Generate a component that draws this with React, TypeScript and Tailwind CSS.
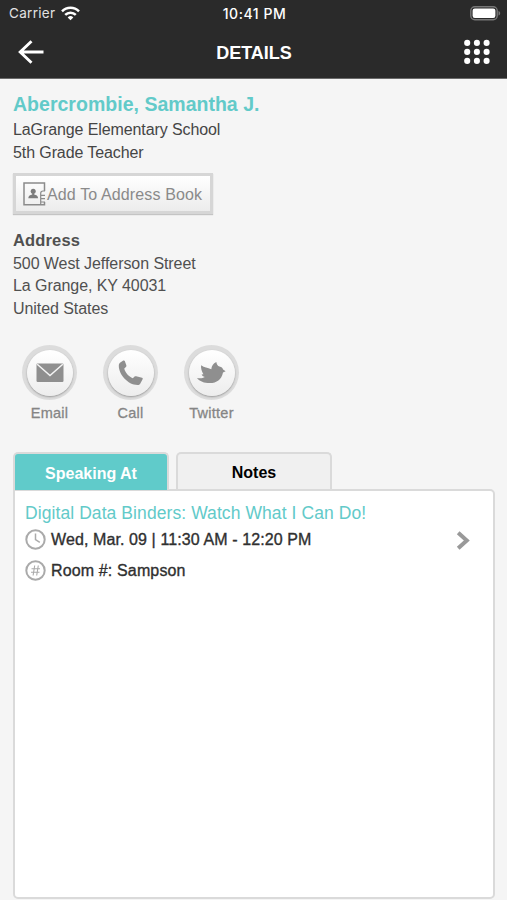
import type { ReactNode } from "react";
import { clsx } from "clsx";

const addressLines = [
  "500 West Jefferson Street",
  "La Grange, KY 40031",
  "United States",
];

const tabs = [
  { id: "speaking", label: "Speaking At", active: true },
  { id: "notes", label: "Notes", active: false },
];

function WifiIcon() {
  return (
    <svg width="19" height="15" viewBox="0 0 19 15" fill="none" stroke="#fff" strokeWidth="2.5">
      <path d="M1 5.4a12 12 0 0 1 17 0" />
      <path d="M4.2 8.9a7.4 7.4 0 0 1 10.6 0" />
      <path d="M9.5 14.2 6.7 11.4a4 4 0 0 1 5.6 0Z" fill="#fff" stroke="none" />
    </svg>
  );
}

function BatteryIcon() {
  return (
    <svg width="31" height="15" viewBox="0 0 31 15">
      <rect x="0.8" y="0.8" width="26.4" height="13" rx="4" fill="none" stroke="#777" strokeWidth="1.4" />
      <rect x="2.6" y="2.6" width="22.8" height="9.4" rx="2.2" fill="#fff" />
      <path d="M28.5 5v4.6c1-.4 1.7-1.2 1.7-2.3S29.5 5.4 28.5 5Z" fill="#777" />
    </svg>
  );
}

function BackIcon() {
  return (
    <svg width="27" height="24" viewBox="0 0 27 24" fill="none" stroke="#fff" strokeWidth="2.9">
      <path d="M25.5 12H2M13.5 1.2 2.2 12l11.3 10.8" />
    </svg>
  );
}

function GridIcon() {
  const steps = [3.2, 12.9, 22.6];
  return (
    <svg width="26" height="26" viewBox="0 0 26 26" fill="#fff">
      {steps.map((y) =>
        steps.map((x) => <circle key={`${x}-${y}`} cx={x} cy={y * 0.93 + 0.9} r="3.05" />)
      )}
    </svg>
  );
}

function AddressBookIcon() {
  return (
    <svg width="23" height="24" viewBox="0 0 23 24" fill="none" stroke="#8b8b8b" strokeWidth="1.5">
      <path d="M18 22.7H1V1h20.5v8M21.5 20v2.7H18" />
      <path d="M22 9h-2c-1.5 0-2.3.8-2.3 2.2v11.5M18 13.3h4M18 16.7h4M18 20h4" strokeWidth="1.2" />
      <circle cx="10.2" cy="9.2" r="2.5" fill="#7c7c7c" stroke="none" />
      <path d="M5.3 16.2c0-2.2 2-3.3 3.9-3.6v-1.8h2v1.8c1.9.3 3.9 1.4 3.9 3.6Z" fill="#7c7c7c" stroke="none" />
    </svg>
  );
}

function EmailIcon() {
  return (
    <svg width="28" height="20" viewBox="0 0 28 20">
      <rect x="0.5" y="0.5" width="27" height="18.5" rx="1.2" fill="#8f8f8f" />
      <path d="M1.2 1.2 14 12.5 26.8 1.2" fill="none" stroke="#f4f4f4" strokeWidth="1.5" />
    </svg>
  );
}

function PhoneIcon() {
  return (
    <svg width="26" height="26" viewBox="0 0 26 26" fill="#8f8f8f">
      <path d="M2.3 2.6 5.3.6c.6-.4 1.3-.2 1.5.4l1.6 4.6c.2.6 0 1.1-.5 1.5L6.3 8.5c.5 3.6 4.5 8.3 8.5 9.7l1.8-1.7c.5-.4 1-.5 1.6-.2l5.8 1.5c.7.2 1 .8.6 1.5l-2.4 4.4c-.3.7-.9 1.1-1.6 1.200C10.500 25.700.6 14.600.8 5.500c.1-1.300.6-2.300 1.500-2.900Z" />
    </svg>
  );
}

function TwitterIcon() {
  return (
    <svg width="29" height="22" viewBox="0 0 29 22" fill="#8f8f8f">
      <path d="M0 15.9c3 .6 5.600.5 7.800-1-1.800-.4-2.800-1.300-3.200-2.500l1.800-.2C4.700 9.200 3.700 6 4.100 3.200c3.300 2.300 6.400 2.500 10.200 4C14.500 4.100 16.200 1.500 19.300 0c.5 2.600 1.400 3.900 3.200 4.500 2 .4 3.200 1.500 3.600 3.100l2.500 1.600-2.600 1.200c-1.500 7.200-6.500 10.700-13.300 10.600C7.300 21 2.500 19.300 0 15.900Z" />
    </svg>
  );
}

function ClockIcon() {
  return (
    <svg width="21" height="21" viewBox="0 0 21 21" fill="none" stroke="#aaa" strokeWidth="2">
      <circle cx="10.5" cy="10.5" r="9.2" />
      <path d="M10.5 4.5v6.2l4.3 2.6" strokeWidth="1.5" />
    </svg>
  );
}

function RoomIcon() {
  return (
    <svg width="21" height="21" viewBox="0 0 21 21" fill="none" stroke="#aaa" strokeWidth="2">
      <circle cx="10.5" cy="10.5" r="9.2" />
      <path d="m9.7 5.5-1.6 10M13.3 5.5l-1.6 10M6.5 8.7h8.5M6 12.3h8.5" strokeWidth="1.1" />
    </svg>
  );
}

function ChevronIcon() {
  return (
    <svg width="15" height="19" viewBox="0 0 15 19" fill="none" stroke="#999" strokeWidth="4">
      <path d="m2.2 1.7 8.6 7.8-8.6 7.8" />
    </svg>
  );
}

function ContactButton({ label, children }: { label: string; children: ReactNode }) {
  return (
    <button type="button" className="flex w-[81px] flex-col items-center">
      <span className="flex size-[55px] items-center justify-center rounded-full bg-[#dcdcdc]">
        <span className="flex size-[46px] items-center justify-center rounded-full bg-linear-to-b from-white to-[#ededed] shadow-[0_1px_2px_#999]">
          {children}
        </span>
      </span>
      <span className="mt-[3px] text-[14.5px] leading-5 tracking-[0.25px] text-[#858585] [-webkit-text-stroke:0.3px_#858585]">
        {label}
      </span>
    </button>
  );
}

export default function App() {
  return (
    <div className="flex h-[900px] w-full flex-col overflow-hidden bg-[#f5f5f5] font-['Liberation_Sans',Arial,sans-serif] text-[#454545]">
      <header className="h-[79px] shrink-0 border-b border-[#6a6a6a] bg-[#2a2a2a] text-white">
        <div className="grid h-[27px] grid-cols-3 items-center pr-[6px] pl-[9px] font-[Inter,sans-serif] text-[13.5px]">
          <div className="flex items-center gap-[6px]">
            <span className="tracking-[0.3px] text-[#e2e2e2]">Carrier</span>
            <WifiIcon />
          </div>
          <span className="-ml-px text-center text-[14px] font-medium tracking-[0.55px]">10:41 PM</span>
          <span className="flex justify-end">
            <BatteryIcon />
          </span>
        </div>
        <div className="grid h-[49px] grid-cols-3 items-center pr-[17px] pl-[18px]">
          <BackIcon />
          <h1 className="pt-[4px] text-center text-[18px] font-bold">DETAILS</h1>
          <span className="flex justify-end">
            <GridIcon />
          </span>
        </div>
      </header>

      <main className="flex min-h-0 flex-1 flex-col px-[13px]">
        <section className="pt-[13px] text-[16px] leading-[22.5px]">
          <h2 className="mb-[3px] text-[19.5px] leading-[24px] font-bold tracking-[0.02px] text-[#62cac9]">
            Abercrombie, Samantha J.
          </h2>
          <p className="tracking-[-0.1px]">LaGrange Elementary School</p>
          <p className="tracking-[-0.1px]">5th Grade Teacher</p>
        </section>

        <button
          type="button"
          className="mt-[9px] flex h-[41px] w-[200px] shrink-0 items-center border-[3px] border-[#d6d6d6] bg-linear-to-b from-white to-[#ececec] pl-[7px] text-[16px] text-[#8a8a8a] shadow-[0_1px_1px_#c4c4c4]"
        >
          <AddressBookIcon />
          <span className="ml-px pt-[3px] whitespace-nowrap tracking-[0.13px]">Add To Address Book</span>
        </button>

        <section className="mt-[15px] text-[16px] leading-[22.5px] text-[#505050]">
          <h3 className="mb-px text-[16.5px] font-bold tracking-[0.15px]">Address</h3>
          {addressLines.map((line) => (
            <p key={line} className="tracking-[-0.07px]">
              {line}
            </p>
          ))}
        </section>

        <div className="-ml-1 mt-[25px] flex">
          <ContactButton label="Email">
            <EmailIcon />
          </ContactButton>
          <ContactButton label="Call">
            <PhoneIcon />
          </ContactButton>
          <ContactButton label="Twitter">
            <TwitterIcon />
          </ContactButton>
        </div>

        <div className="mt-[29px] flex h-[37px] shrink-0 gap-[7px]">
          {tabs.map((tab) => (
            <button
              key={tab.id}
              type="button"
              className={clsx(
                "w-[156px] rounded-t-[5px] border-2 border-b-0 border-[#dadada] pt-[3px] text-[16px] font-bold",
                tab.active
                  ? "relative h-[38px] bg-[#60cbca] text-white"
                  : "h-[37px] bg-[#f0f0f0] text-black"
              )}
            >
              {tab.label}
            </button>
          ))}
        </div>

        <section className="mr-[-1px] h-[410px] shrink-0 rounded-[5px] rounded-tl-none border-2 border-[#dadada] bg-white pt-[12px] pr-[22px] pl-[10px]">
          <h4 className="text-[17.5px] leading-[20px] tracking-[0.08px] text-[#62cac9]">
            Digital Data Binders: Watch What I Can Do!
          </h4>
          <div className="flex items-center justify-between">
            <div className="flex h-[32px] items-center gap-[5px] text-[16px] tracking-[0.1px] text-[#303030] [-webkit-text-stroke:0.35px_#303030]">
              <ClockIcon />
              <span className="pt-[2px]">Wed, Mar. 09 | 11:30 AM - 12:20 PM</span>
            </div>
            <span className="pt-[2px]">
              <ChevronIcon />
            </span>
          </div>
          <div className="flex h-[30px] items-center gap-[5px] text-[16px] tracking-[0.14px] text-[#303030] [-webkit-text-stroke:0.35px_#303030]">
            <RoomIcon />
            <span className="pt-[2px]">Room #: Sampson</span>
          </div>
        </section>
      </main>
    </div>
  );
}
